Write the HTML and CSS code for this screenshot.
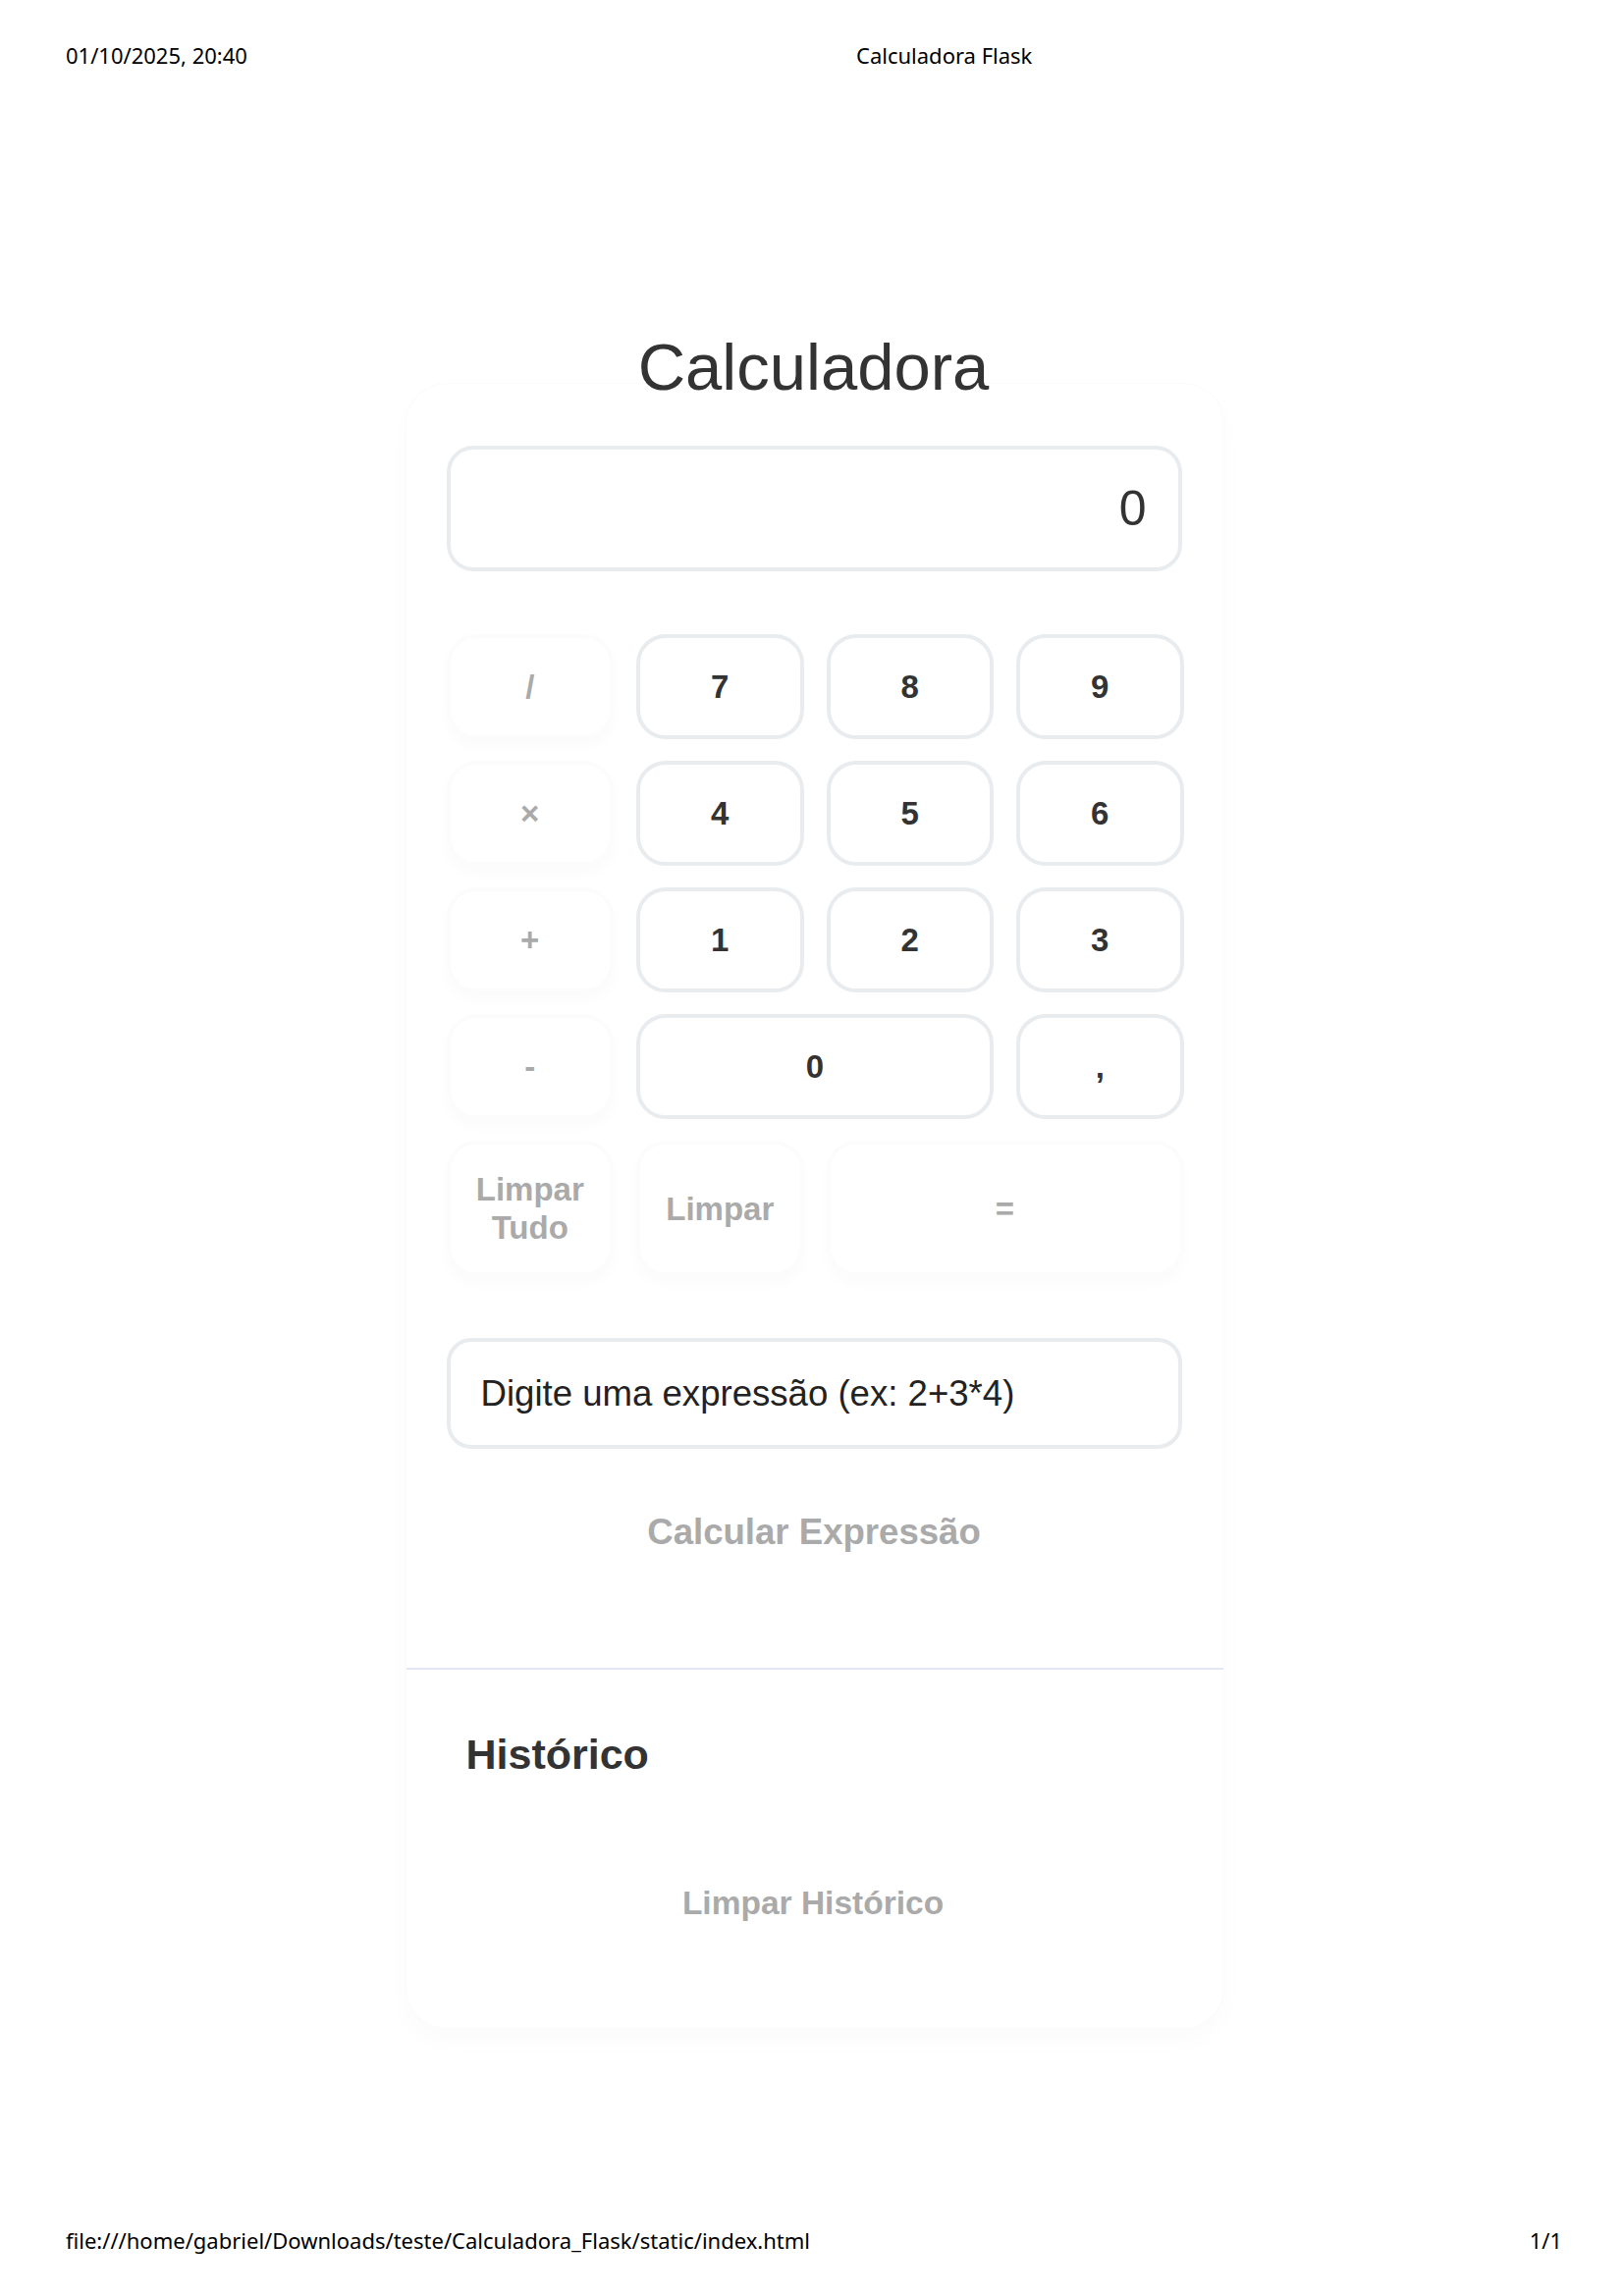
FILE: index.html
```html
<!DOCTYPE html>
<html lang="pt-BR">
<head>
<meta charset="utf-8">
<title>Calculadora Flask</title>
<link rel="stylesheet" href="styles.css">
</head>
<body>
  <header class="print-header">
    <span class="ph-date">01/10/2025, 20:40</span>
    <span class="ph-title">Calculadora Flask</span>
  </header>

  <main class="page">
    <div class="app">
      <h1 class="title">Calculadora</h1>
      <div class="card">
        <section class="calc">
          <div class="display">0</div>

          <div class="keypad">
            <button class="key op">/</button>
            <button class="key num">7</button>
            <button class="key num">8</button>
            <button class="key num">9</button>

            <button class="key op">×</button>
            <button class="key num">4</button>
            <button class="key num">5</button>
            <button class="key num">6</button>

            <button class="key op">+</button>
            <button class="key num">1</button>
            <button class="key num">2</button>
            <button class="key num">3</button>

            <button class="key op">-</button>
            <button class="key num span2">0</button>
            <button class="key num">,</button>

            <button class="key op two-line">Limpar<br>Tudo</button>
            <button class="key op">Limpar</button>
            <button class="key op span2">=</button>
          </div>

          <input class="expr" type="text" placeholder="Digite uma expressão (ex: 2+3*4)">

          <div class="center">
            <button class="text-btn calc-btn">Calcular Expressão</button>
          </div>
        </section>

        <section class="history">
          <h2 class="history-title">Histórico</h2>
          <div class="center">
            <button class="text-btn clear-btn">Limpar Histórico</button>
          </div>
        </section>
      </div>
    </div>
  </main>

  <footer class="print-footer">
    <span>file:///home/gabriel/Downloads/teste/Calculadora_Flask/static/index.html</span>
    <span>1/1</span>
  </footer>
</body>
</html>
```

FILE: styles.css
```css
* { box-sizing: border-box; }

html, body {
  margin: 0;
  padding: 0;
  background: #ffffff;
}

body {
  width: 1653px;
  height: 2339px;
  display: flex;
  flex-direction: column;
  font-family: "Liberation Sans", Arial, sans-serif;
  color: #333;
}

.print-header {
  display: grid;
  grid-template-columns: 805px 1fr;
  padding: 41px 62px 0 67px;
  font-family: "Noto Sans", "Open Sans", sans-serif;
  font-size: 22px;
  line-height: 30px;
  color: #000;
}

.page {
  flex: 1;
}

.app {
  width: 834px;
  margin-left: calc(50% - 414px);
}

.title {
  margin: 264px 0 0 0;
  padding-right: 2px;
  text-align: center;
  font-family: "Liberation Sans", Arial, sans-serif;
  font-weight: normal;
  font-size: 67px;
  line-height: 77px;
  color: #333;
  position: relative;
  z-index: 1;
}

.card {
  margin-top: -22px;
  background: #fff;
  border-radius: 42px;
  border: 1px solid #fbfbfb;
  box-shadow: 0 12px 26px rgba(0, 0, 0, 0.018);
}

.calc {
  padding: 63px 42px 88px 41px;
}

.display {
  height: 128px;
  border: 4px solid #e9ecef;
  border-radius: 27px;
  padding: 0 32px;
  display: flex;
  align-items: center;
  justify-content: flex-end;
  font-size: 50px;
  color: #333;
  background: #fff;
}

.keypad {
  margin-top: 64px;
  margin-right: -2px;
  display: grid;
  grid-template-columns: repeat(4, 1fr);
  gap: 22px 23px;
}

.key {
  font-family: "Liberation Sans", Arial, sans-serif;
  font-weight: bold;
  font-size: 33px;
  line-height: 39px;
  padding: 30px 0;
  border-radius: 30px;
  background: #fff;
  text-align: center;
  cursor: pointer;
}

.two-line {
  padding: 26px 0;
}

.num {
  border: 4px solid #e9ecef;
  color: #333;
}

.op {
  border: 4px solid #fcfcfc;
  color: #aaaaaa;
  box-shadow: 0 8px 14px rgba(0, 0, 0, 0.018);
}

.span2 {
  grid-column: span 2;
}

.expr {
  display: block;
  width: 100%;
  height: 113px;
  margin-top: 63px;
  border: 4px solid #e9ecef;
  border-radius: 25px;
  padding: 0 31px;
  font-family: "Liberation Sans", Arial, sans-serif;
  font-size: 36.6px;
  color: #222;
  background: #fff;
  outline: none;
}

.expr::placeholder {
  color: #222;
  opacity: 1;
}

.center {
  display: flex;
  justify-content: center;
}

.text-btn {
  border: none;
  background: transparent;
  font-family: "Liberation Sans", Arial, sans-serif;
  font-weight: bold;
  color: #aaaaaa;
  padding: 30px 40px;
  cursor: pointer;
}

.calc-btn {
  margin-top: 34px;
  font-size: 36.6px;
  line-height: 41px;
}

.history {
  border-top: 2px solid #e3e6f6;
  padding: 61px 68px 78px 61px;
}

.history-title {
  margin: 0;
  font-size: 43px;
  line-height: 50px;
  font-weight: bold;
  color: #333;
}

.clear-btn {
  margin-top: 78px;
  margin-left: 4px;
  font-size: 33.5px;
  line-height: 38px;
}

.print-footer {
  display: flex;
  justify-content: space-between;
  padding: 0 62px 42px 67px;
  font-family: "Noto Sans", "Open Sans", sans-serif;
  font-size: 22px;
  line-height: 30px;
  color: #000;
}
```
